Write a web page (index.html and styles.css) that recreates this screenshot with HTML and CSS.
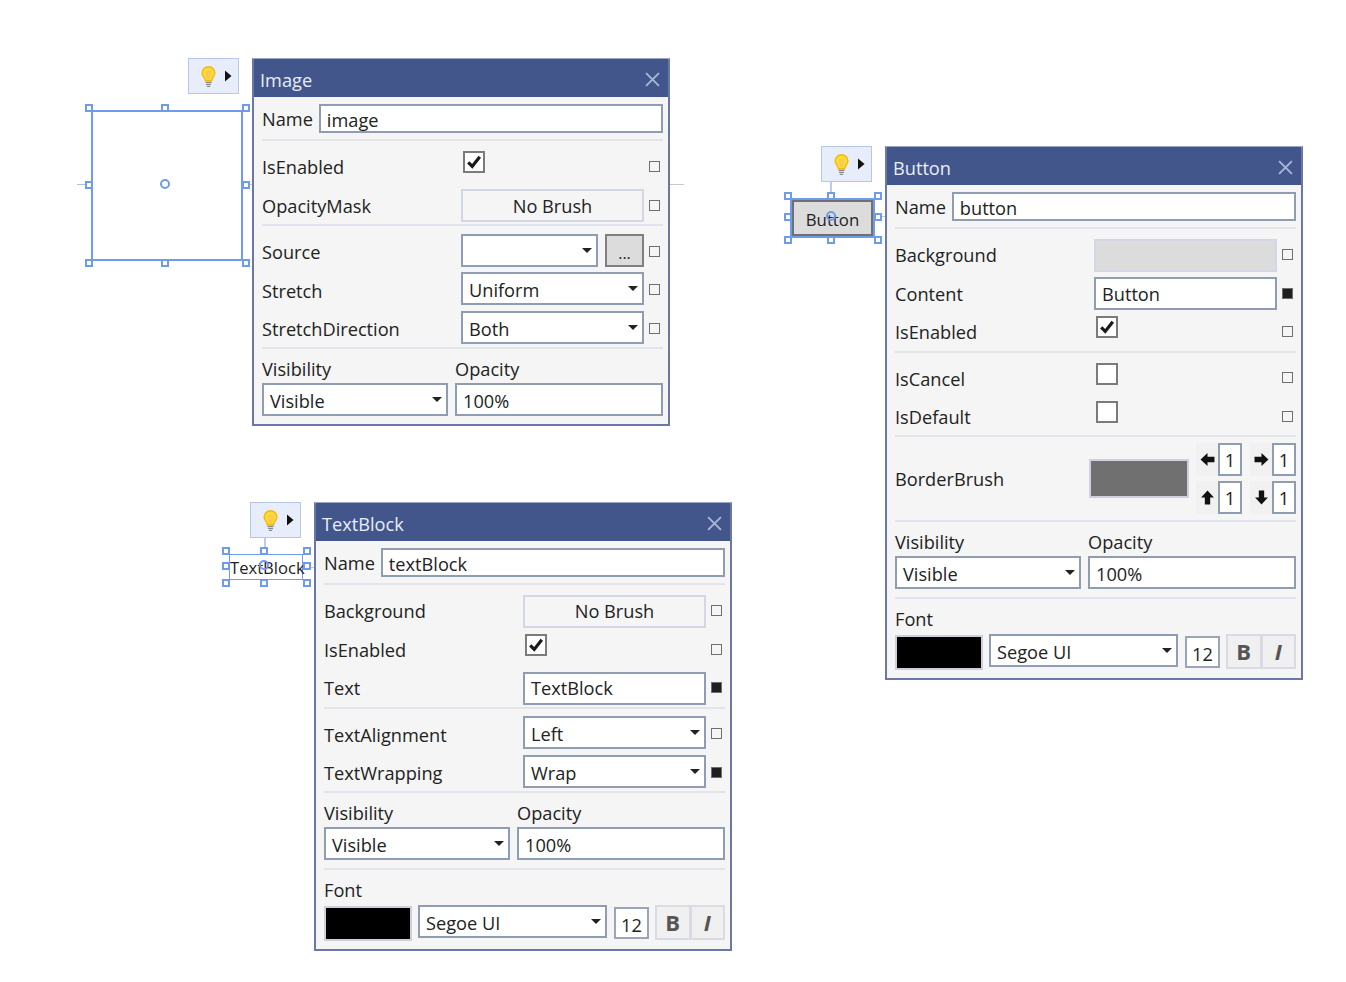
FILE: index.html
```html
<!DOCTYPE html>
<html lang="en">
<head>
<meta charset="UTF-8">
<meta name="viewport" content="width=device-width, initial-scale=1.0">
<title>Property panels</title>
<link rel="stylesheet" href="styles.css">
</head>
<body>
<svg class="defs" width="0" height="0">
  <symbol id="bulb" viewBox="0 0 20 26">
    <path d="M10 1.500a7.500 7.500 0 0 0-7.500 7.500c0 3 1.800 4.600 2.800 6.200.6 1 .8 1.800.9 2.800h7.600c.1-1 .3-1.800.9-2.800 1-1.600 2.800-3.200 2.800-6.200A7.500 7.500 0 0 0 10 1.500z" fill="#ffd83a" stroke="#f2b90f" stroke-width="1.600"/>
    <path d="M6.500 7.500h7M8.500 7.500v3.500l1 5M11.500 7.500v3.500l-1 5" fill="none" stroke="#f5c65a" stroke-width="1.300"/>
    <path d="M6.500 20h7M7 22.300h6M8 24.500h4" stroke="#8a8a8a" stroke-width="1.500"/>
  </symbol>
  <symbol id="more" viewBox="0 0 8 12">
    <path d="M1 0.500v11l6.500-5.500z" fill="#111"/>
  </symbol>
  <symbol id="close" viewBox="0 0 14 14">
    <path d="M1 1l12 12M13 1L1 13" stroke="#a9b5d6" stroke-width="1.800" fill="none"/>
  </symbol>
  <symbol id="check" viewBox="0 0 18 18">
    <path d="M2.500 9.500l4.500 4.500L15.500 3" stroke="#1a1a1a" stroke-width="3.600" fill="none"/>
  </symbol>
  <symbol id="arrow" viewBox="0 0 14 14">
    <path d="M0.500 7L7 1v3.500h6.500v5H7V13z" fill="#111"/>
  </symbol>
</svg>

<!-- Image on the design surface -->
<div class="tick tick-image-l"></div>
<div class="tick tick-image-r"></div>
<div class="tick tick-image-far"></div>
<div class="bulb-box bulb-image">
  <svg class="bulb"><use href="#bulb"/></svg>
  <svg class="more"><use href="#more"/></svg>
</div>
<div class="adorner adorner-image">
  <i class="handle tl"></i><i class="handle tm"></i><i class="handle tr"></i>
  <i class="handle ml"></i><i class="handle mr"></i>
  <i class="handle bl"></i><i class="handle bm"></i><i class="handle br"></i>
  <i class="pivot"></i>
</div>

<div class="panel panel-image">
  <div class="panel-title"><span>Image</span><svg class="close"><use href="#close"/></svg></div>
  <div class="panel-body">
    <div class="name-row"><label>Name</label><div class="field grow">image</div></div>
    <div class="sep"></div>
    <div class="group first">
      <div class="row"><label>IsEnabled</label><div class="ctl"><span class="box"><svg><use href="#check"/></svg></span></div><i class="mark"></i></div>
      <div class="row"><label>OpacityMask</label><div class="ctl"><div class="brush">No Brush</div></div><i class="mark"></i></div>
    </div>
    <div class="sep pull"></div>
    <div class="group">
      <div class="row"><label>Source</label><div class="ctl split"><div class="combo grow"></div><div class="browse">...</div></div><i class="mark"></i></div>
      <div class="row"><label>Stretch</label><div class="ctl"><div class="combo">Uniform</div></div><i class="mark"></i></div>
      <div class="row"><label>StretchDirection</label><div class="ctl"><div class="combo">Both</div></div><i class="mark"></i></div>
    </div>
    <div class="sep"></div>
    <div class="vis-grid">
      <label>Visibility</label><label>Opacity</label>
      <div class="combo">Visible</div><div class="field">100%</div>
    </div>
  </div>
</div>

<!-- Button on the design surface -->
<div class="tick tick-button-r"></div>
<div class="stem stem-button"></div>
<div class="bulb-box bulb-button">
  <svg class="bulb"><use href="#bulb"/></svg>
  <svg class="more"><use href="#more"/></svg>
</div>
<div class="adorner adorner-button">
  <div class="fake-button">Button</div>
  <i class="handle tl"></i><i class="handle tm"></i><i class="handle tr"></i>
  <i class="handle ml"></i><i class="handle mr"></i>
  <i class="handle bl"></i><i class="handle bm"></i><i class="handle br"></i>
  <i class="pivot"></i>
</div>

<div class="panel panel-button">
  <div class="panel-title"><span>Button</span><svg class="close"><use href="#close"/></svg></div>
  <div class="panel-body">
    <div class="name-row"><label>Name</label><div class="field grow">button</div></div>
    <div class="sep"></div>
    <div class="group first">
      <div class="row"><label>Background</label><div class="ctl"><div class="brush solid"></div></div><i class="mark"></i></div>
      <div class="row"><label>Content</label><div class="ctl"><div class="field">Button</div></div><i class="mark on"></i></div>
      <div class="row"><label>IsEnabled</label><div class="ctl"><span class="box"><svg><use href="#check"/></svg></span></div><i class="mark"></i></div>
    </div>
    <div class="sep pull"></div>
    <div class="group">
      <div class="row"><label>IsCancel</label><div class="ctl"><span class="box"></span></div><i class="mark"></i></div>
      <div class="row"><label>IsDefault</label><div class="ctl"><span class="box"></span></div><i class="mark"></i></div>
    </div>
    <div class="sep"></div>
    <div class="thick-row">
      <label>BorderBrush</label>
      <div class="swatch"></div>
      <div class="thick-grid">
        <div class="thick"><span class="arrow-btn"><svg><use href="#arrow"/></svg></span><span class="num">1</span></div>
        <div class="thick"><span class="arrow-btn"><svg class="right"><use href="#arrow"/></svg></span><span class="num">1</span></div>
        <div class="thick"><span class="arrow-btn"><svg class="up"><use href="#arrow"/></svg></span><span class="num">1</span></div>
        <div class="thick"><span class="arrow-btn"><svg class="down"><use href="#arrow"/></svg></span><span class="num">1</span></div>
      </div>
    </div>
    <div class="sep"></div>
    <div class="vis-grid">
      <label>Visibility</label><label>Opacity</label>
      <div class="combo">Visible</div><div class="field">100%</div>
    </div>
    <div class="sep gap"></div>
    <div class="font-block">
      <label>Font</label>
      <div class="font-row">
        <div class="font-swatch"></div>
        <div class="combo font-name">Segoe UI</div>
        <div class="font-size">12</div>
        <div class="style-btns"><span class="style-b">B</span><span class="style-i">I</span></div>
      </div>
    </div>
  </div>
</div>

<!-- TextBlock on the design surface -->
<div class="tick tick-text-r"></div>
<div class="stem stem-text"></div>
<div class="bulb-box bulb-text">
  <svg class="bulb"><use href="#bulb"/></svg>
  <svg class="more"><use href="#more"/></svg>
</div>
<div class="adorner adorner-text">
  <div class="fake-text">TextBlock</div>
  <i class="handle tl"></i><i class="handle tm"></i><i class="handle tr"></i>
  <i class="handle ml"></i><i class="handle mr"></i>
  <i class="handle bl"></i><i class="handle bm"></i><i class="handle br"></i>
  <i class="pivot"></i>
</div>

<div class="panel panel-text">
  <div class="panel-title"><span>TextBlock</span><svg class="close"><use href="#close"/></svg></div>
  <div class="panel-body">
    <div class="name-row"><label>Name</label><div class="field grow">textBlock</div></div>
    <div class="sep"></div>
    <div class="group first">
      <div class="row"><label>Background</label><div class="ctl"><div class="brush">No Brush</div></div><i class="mark"></i></div>
      <div class="row"><label>IsEnabled</label><div class="ctl"><span class="box"><svg><use href="#check"/></svg></span></div><i class="mark"></i></div>
      <div class="row"><label>Text</label><div class="ctl"><div class="field">TextBlock</div></div><i class="mark on"></i></div>
    </div>
    <div class="sep pull"></div>
    <div class="group">
      <div class="row"><label>TextAlignment</label><div class="ctl"><div class="combo">Left</div></div><i class="mark"></i></div>
      <div class="row"><label>TextWrapping</label><div class="ctl"><div class="combo">Wrap</div></div><i class="mark on"></i></div>
    </div>
    <div class="sep"></div>
    <div class="vis-grid">
      <label>Visibility</label><label>Opacity</label>
      <div class="combo">Visible</div><div class="field">100%</div>
    </div>
    <div class="sep gap"></div>
    <div class="font-block">
      <label>Font</label>
      <div class="font-row">
        <div class="font-swatch"></div>
        <div class="combo font-name">Segoe UI</div>
        <div class="font-size">12</div>
        <div class="style-btns"><span class="style-b">B</span><span class="style-i">I</span></div>
      </div>
    </div>
  </div>
</div>
</body>
</html>
```

FILE: styles.css
```css
* {
  box-sizing: border-box;
}

html, body {
  margin: 0;
  height: 982px;
  overflow: hidden;
  background: #fff;
}

body {
  position: relative;
  font-family: "Open Sans", "Noto Sans", sans-serif;
  font-size: 18.2px;
  color: #222;
}

label {
  display: block;
}

.defs {
  position: absolute;
}

/* Panels sit on a free canvas */
.panel {
  position: absolute;
  width: 418px;
  border: 2px solid #6b78a6;
  border-top-color: #9aa6c6;
  background: #f5f5f5;
}

.panel-image { left: 252px; top: 58px; }
.panel-button { left: 885px; top: 146px; }
.panel-text { left: 314px; top: 502px; }

.panel-title {
  height: 38px;
  margin: -1px 0 0;
  padding: 0 8px 0 6px;
  display: flex;
  align-items: center;
  justify-content: space-between;
  background: #42568c;
  color: #e9edf6;
  font-size: 18.2px;
}

.panel-title span {
  padding-top: 4px;
}

.close {
  width: 15px;
  height: 15px;
  margin: 2px 0 0;
}

.panel-body {
  padding: 7px 5px 6px 8px;
}

.panel-image .panel-body {
  padding-bottom: 8px;
}

.name-row {
  display: flex;
  gap: 6px;
  height: 29px;
  align-items: center;
}

.name-row .field {
  height: 29px;
}

.grow {
  flex: 1;
}

.field, .combo {
  height: 33px;
  padding: 3px 6px 0;
  display: flex;
  align-items: center;
  background: #fff;
  border: 2px solid #8f9db3;
  position: relative;
}

.row .field {
  padding-top: 0;
}

.combo::after {
  content: "";
  position: absolute;
  right: 4px;
  top: 12px;
  border: 5px solid transparent;
  border-top: 5px solid #222;
  border-bottom: 0;
}

.sep {
  height: 2px;
  margin-top: 6px;
  background: #e1e4ea;
}

.sep.pull {
  margin-top: -1px;
}

.sep.gap {
  margin-top: 8px;
}

.group {
  padding-top: 5px;
}

.group.first {
  padding-top: 7px;
}

.group + .sep {
  margin-top: 0;
}

.group + .sep.pull {
  margin-top: -1px;
}

.row {
  display: flex;
  align-items: center;
  height: 38.5px;
}

.row label {
  width: 199px;
}

.group:not(.first) label {
  padding-top: 4px;
}

.ctl {
  width: 183px;
}

.split {
  display: flex;
  gap: 7px;
}

.mark {
  display: block;
  width: 11px;
  height: 11px;
  margin: -1px 0 0 5px;
  border: 1.5px solid #6f6f6f;
}

.group:not(.first) .mark {
  margin-top: 2px;
}

.mark.on {
  background: #1f1f1f;
}

.box {
  display: block;
  width: 22px;
  height: 22px;
  margin: -10px 0 0 2px;
  padding: 1px;
  background: #fff;
  border: 2px solid #7b7b7b;
}

.group:not(.first) .box {
  margin-top: -6px;
}

.box svg {
  display: block;
  width: 16px;
  height: 16px;
}

.brush {
  height: 33px;
  display: flex;
  align-items: center;
  justify-content: center;
  border: 2px solid #d3d6e4;
  background: #f5f5f5;
}

.brush.solid {
  background: #dcdcdc;
}

.browse {
  width: 39px;
  height: 33px;
  display: flex;
  align-items: flex-end;
  justify-content: center;
  background: #dcdcdc;
  border: 2px solid #7f7f7f;
  font-size: 16px;
  line-height: 24px;
}

.vis-grid {
  margin-top: 8.5px;
  display: grid;
  grid-template-columns: 186px 208px;
  column-gap: 7px;
  row-gap: 1.5px;
}

.vis-grid label {
  line-height: 24px;
}

.thick-row {
  display: flex;
  align-items: center;
  height: 72px;
  margin-top: 5px;
}

.thick-row label {
  width: 194px;
  padding-top: 2px;
}

.swatch {
  width: 100px;
  height: 39px;
  margin-top: 1px;
  background: #707070;
  border: 2px solid #cfcfe0;
}

.thick-grid {
  margin: 1px 0 0 7px;
  display: grid;
  grid-template-columns: 46px 46px;
  gap: 5px 8px;
}

.thick {
  display: flex;
  height: 33px;
}

.arrow-btn {
  width: 22px;
  display: flex;
  align-items: center;
  justify-content: center;
  background: #f1f1f1;
}

.arrow-btn svg {
  width: 15px;
  height: 15px;
}

.arrow-btn svg.right { transform: rotate(180deg); }
.arrow-btn svg.up { transform: rotate(90deg); }
.arrow-btn svg.down { transform: rotate(-90deg); }

.num {
  width: 24px;
  padding-top: 2px;
  display: flex;
  align-items: center;
  justify-content: center;
  background: #fff;
  border: 2px solid #8f9db3;
}

.font-block {
  margin-top: 8px;
}

.font-block label {
  line-height: 24px;
}

.font-row {
  display: flex;
  align-items: flex-start;
  margin: 3px 0 2px;
}

.font-swatch {
  width: 88px;
  height: 35px;
  margin-top: 1px;
  background: #000;
  border: 2px solid #cdd0da;
}

.font-name {
  width: 189px;
  margin-left: 6px;
}

.font-size {
  width: 35px;
  height: 32px;
  padding-top: 4px;
  margin: 2px 0 0 7px;
  display: flex;
  align-items: center;
  justify-content: center;
  background: #fff;
  border: 2px solid #9aa6b8;
}

.style-btns {
  display: flex;
  margin-left: 6px;
}

.style-btns span {
  width: 35.5px;
  height: 35px;
  display: flex;
  align-items: center;
  justify-content: center;
  border: 2px solid #d8dbe4;
  background: #f0f0f0;
  color: #555;
  font-weight: 700;
  font-size: 22px;
}

.style-btns .style-i {
  margin-left: -1px;
  font-style: italic;
}

/* Design surface bits */
.bulb-box {
  position: absolute;
  width: 51px;
  height: 36px;
  display: flex;
  align-items: center;
  padding-left: 11px;
  background: #e8edfb;
  border: 1.5px solid #b9c7e6;
}

.bulb-image { left: 188px; top: 58px; }
.bulb-button { left: 821px; top: 146px; }
.bulb-text { left: 250px; top: 502px; }

.bulb {
  width: 17px;
  height: 23px;
}

.more {
  width: 8px;
  height: 12px;
  margin-left: 7px;
}

.tick, .stem {
  position: absolute;
  background: #c8c8c8;
}

.tick { height: 1px; }
.tick-image-l { left: 77px; top: 184px; width: 9px; background: #a9c1ee; }
.tick-image-r { left: 246px; top: 184px; width: 8px; }
.tick-image-far { left: 670px; top: 184px; width: 14px; }
.tick-button-r { left: 881px; top: 216px; width: 4px; }
.tick-text-r { left: 310px; top: 567px; width: 4px; }

.stem {
  width: 2px;
  background: #b9cdf2;
}

.stem-button { left: 830px; top: 182px; height: 11px; }
.stem-text { left: 264px; top: 538px; height: 11px; }

.adorner {
  position: absolute;
  border: 2px solid #6f9bee;
}

.adorner-image { left: 91px; top: 110px; width: 152px; height: 151px; }
.adorner-button { left: 790px; top: 198px; width: 85px; height: 40px; }
.adorner-text { left: 229px; top: 554px; width: 74px; height: 26px; border-width: 1.5px; }

.handle {
  position: absolute;
  width: 8px;
  height: 8px;
  background: #fff;
  border: 2px solid #6f9bee;
}

.handle.tl { left: -8px; top: -8px; }
.handle.tm { left: calc(50% - 6px); top: -8px; }
.handle.tr { right: -9px; top: -8px; }
.handle.ml { left: -8px; top: calc(50% - 5px); }
.handle.mr { right: -9px; top: calc(50% - 5px); }
.handle.bl { left: -8px; bottom: -8px; }
.handle.bm { left: calc(50% - 6px); bottom: -8px; }
.handle.br { right: -9px; bottom: -8px; }

.pivot {
  position: absolute;
  left: calc(50% - 7px);
  top: calc(50% - 7px);
  width: 10px;
  height: 10px;
  border: 2px solid #6f9bee;
  border-radius: 50%;
}

.fake-button {
  height: 100%;
  padding-top: 2px;
  display: flex;
  align-items: center;
  justify-content: center;
  background: #dcdcdc;
  border: 2px solid #707070;
  font-size: 16.8px;
}

.fake-text {
  font-size: 16.6px;
  line-height: 25px;
  white-space: nowrap;
}
```
